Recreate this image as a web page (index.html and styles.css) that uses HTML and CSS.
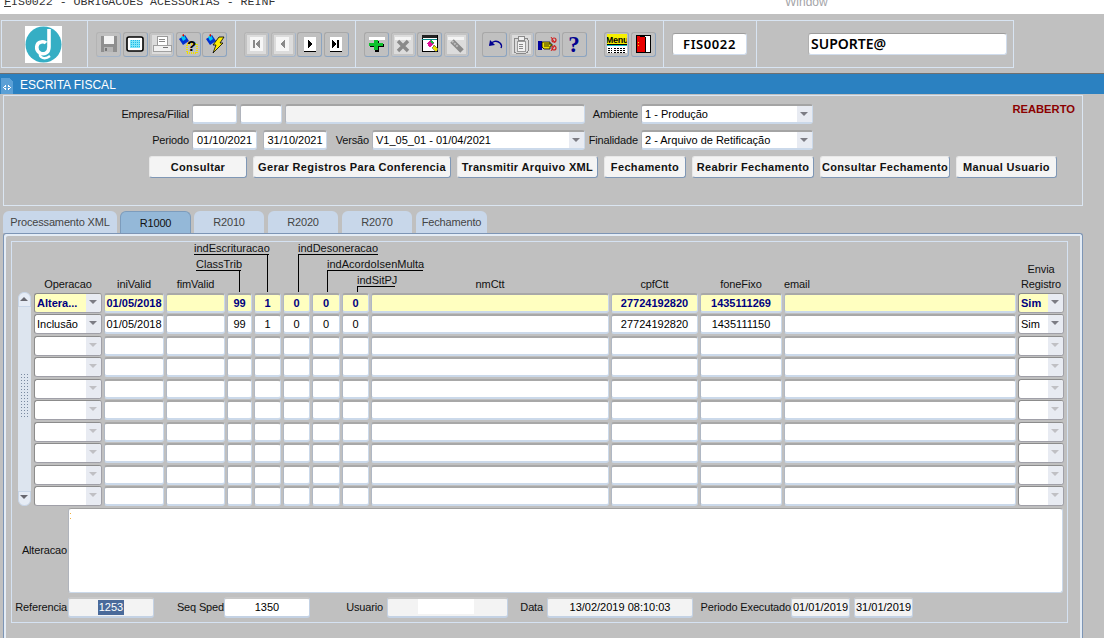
FILE: index.html

```html
<!DOCTYPE html>
<html lang="en">
<head>
    <meta charset="UTF-8">
    <title>FIS0022 - Obrigacoes Acessorias - REINF</title>
    <link rel="stylesheet" href="styles.css">
</head>
<body>
    <div class="titlebar">
        <span class="app-title"><u>F</u>IS0022 - OBRIGACOES ACESSORIAS - REINF</span>
        <span class="app-menu">Window</span>
    </div>

    <div class="toolbar-wrap">
        <div class="toolbar">
            <div class="tb-section tb-logo">
                <svg class="logo" viewBox="0 0 37 37">
                    <rect width="37" height="37" fill="#fff"/>
                    <circle cx="18.500" cy="18.500" r="18" fill="#35aec4"/>
                    <path d="M24 3 V21 C24 27 19 29 15 27 C10 24 11 17 16 16 C18 15.500 20 16 21 17" fill="none" stroke="#fff" stroke-width="3.600"/>
                    <path d="M15 27 C14 32 20 34 25 30" fill="none" stroke="#fff" stroke-width="2.400"/>
                </svg>
            </div>

            <div class="tb-section s-148">
                <button class="tool off">
                    <svg viewBox="0 0 20 20" shape-rendering="crispEdges"><rect x="2" y="2" width="16" height="16" fill="#8f8f8f"/><rect x="5" y="2" width="10" height="8" fill="#f4f4f4"/><rect x="5" y="13" width="9" height="5" fill="#b4b4b4"/><rect x="6" y="14" width="2" height="3" fill="#777"/></svg>
                </button>
                <button class="tool">
                    <svg viewBox="0 0 20 20"><defs><pattern id="dots" width="2" height="2" patternUnits="userSpaceOnUse"><rect width="2" height="2" fill="#7fe6f7"/><rect width="1" height="1" fill="#1fb8e8"/></pattern></defs><rect x="2" y="3" width="16" height="14" rx="2" fill="#fff" stroke="#000" stroke-width="1.600"/><rect x="5" y="6" width="10" height="8" fill="url(#dots)"/></svg>
                </button>
                <button class="tool off dim">
                    <svg viewBox="0 0 20 20" shape-rendering="crispEdges"><rect x="5" y="2" width="10" height="9" fill="#fff" stroke="#9a9a9a"/><path d="M7 5H13M7 7H13" stroke="#888"/><rect x="1" y="11" width="18" height="6" fill="#f2f2f2" stroke="#a0a0a0"/><rect x="11" y="13" width="5" height="1" fill="#777"/></svg>
                </button>
                <button class="tool">
                    <svg viewBox="0 0 20 20"><polygon points="1,5 7,1 11,7 5,11" fill="#0030d0"/><polygon points="3,3 6,1 8,5 5,7" fill="#00c8f0"/><polygon points="4,1 6,0 6,3" fill="#d00000"/><rect x="9" y="10" width="10" height="9" fill="none" stroke="#f0e000" stroke-width="2" stroke-dasharray="1 1"/><text class="ico-q" x="9" y="17">?</text></svg>
                </button>
                <button class="tool">
                    <svg viewBox="0 0 20 20"><polygon points="1,5 7,1 11,7 5,11" fill="#0030d0"/><polygon points="3,3 6,1 8,5 5,7" fill="#00c8f0"/><polygon points="4,1 6,0 6,3" fill="#d00000"/><polygon points="14,3 19,3 15,9 18,9 8,19 11,11 8,11" fill="#ffee00" stroke="#000" stroke-width=".8"/></svg>
                </button>
            </div>

            <div class="tb-section s-120">
                <button class="tool off dim">
                    <svg viewBox="0 0 20 20" shape-rendering="crispEdges"><rect x="3" y="3" width="13" height="14" fill="#f6f6f6"/><rect x="6" y="6" width="2" height="8" fill="#8a8a8a"/><polygon points="13,5 13,15 8,10" fill="#8a8a8a"/></svg>
                </button>
                <button class="tool off dim">
                    <svg viewBox="0 0 20 20" shape-rendering="crispEdges"><rect x="3" y="3" width="13" height="14" fill="#f6f6f6"/><polygon points="12,5 12,15 7,10" fill="#8a8a8a"/></svg>
                </button>
                <button class="tool">
                    <svg viewBox="0 0 20 20" shape-rendering="crispEdges"><rect x="4" y="3" width="12" height="14" fill="#fff"/><path d="M4 17H16" stroke="#000"/><polygon points="8,6 8,14 13,10" fill="#000"/></svg>
                </button>
                <button class="tool">
                    <svg viewBox="0 0 20 20" shape-rendering="crispEdges"><rect x="4" y="3" width="12" height="14" fill="#fff"/><path d="M4 17H16" stroke="#000"/><polygon points="6,6 6,14 11,10" fill="#000"/><rect x="11" y="6" width="2" height="8" fill="#000"/></svg>
                </button>
            </div>

            <div class="tb-section s-120">
                <button class="tool">
                    <svg viewBox="0 0 20 20" shape-rendering="crispEdges"><rect x="2" y="3" width="16" height="3" fill="#fff"/><path d="M8 7H12V10H17V13H12V18H8V13H3V10H8Z" fill="#000"/><path d="M7 6H11V9H16V12H11V16H7V12H2V9H7Z" fill="#0cc02c"/></svg>
                </button>
                <button class="tool off dim">
                    <svg viewBox="0 0 20 20"><rect x="2" y="3" width="16" height="3" fill="#f4f4f4"/><path d="M5 7L15 17M15 7L5 17" stroke="#8a8a8a" stroke-width="3.400"/></svg>
                </button>
                <button class="tool">
                    <svg viewBox="0 0 20 20" shape-rendering="crispEdges"><rect x="2" y="1" width="15" height="16" fill="#fff" stroke="#000"/><rect x="2" y="1" width="15" height="3" fill="#222"/><rect x="2" y="5" width="15" height="1" fill="#0a8a8a"/><polygon points="7,9 11,6 14,9 10,14" fill="#e0109a"/><polygon points="11,6 14,9 12,10 10,8" fill="#20b040"/><polygon points="14,11 18,15 16,18 12,14" fill="#f0e000" stroke="#555" stroke-width=".6"/></svg>
                </button>
                <button class="tool off dim">
                    <svg viewBox="0 0 20 20"><rect x="2" y="3" width="16" height="3" fill="#f4f4f4"/><path d="M6 7L16 17" stroke="#8a8a8a" stroke-width="5"/><path d="M6 7L12 13" stroke="#bdbdbd" stroke-width="2" stroke-dasharray="2 1"/></svg>
                </button>
            </div>

            <div class="tb-section s-120 s-tight">
                <button class="tool">
                    <svg viewBox="0 0 20 20"><path d="M5 6L4 12L10 11" fill="#000090"/><path d="M5 11C7 7 12 6 15 9C16 10 17 12 16 14" fill="none" stroke="#000090" stroke-width="1.400"/></svg>
                </button>
                <button class="tool off dim">
                    <svg viewBox="0 0 20 20" shape-rendering="crispEdges"><rect x="3" y="4" width="14" height="15" rx="2" fill="#dcdcdc" stroke="#8a8a8a"/><rect x="7" y="2" width="6" height="4" fill="#f0f0f0" stroke="#8a8a8a"/><rect x="6" y="7" width="8" height="10" fill="#f2f2f2" stroke="#9a9a9a"/><path d="M8 10H12M8 12H12M8 14H12" stroke="#8a8a8a"/></svg>
                </button>
                <button class="tool">
                    <svg viewBox="0 0 20 20"><rect x="0" y="7" width="4" height="9" fill="#0000a0"/><path d="M4 8H12V10H14V12H12V15H6L4 13Z" fill="#f0e000" stroke="#000" stroke-width=".8"/><path d="M6 10H12M6 12H11" stroke="#000" stroke-width=".8"/><circle cx="16" cy="6" r="2" fill="none" stroke="#d02020" stroke-width="1.200"/><circle cx="16" cy="14" r="2" fill="none" stroke="#d02020" stroke-width="1.200"/><path d="M13 3L17 9M13 17L17 11" stroke="#d02020"/></svg>
                </button>
                <button class="tool">
                    <svg viewBox="0 0 20 20"><text class="ico-help" x="10" y="18">?</text></svg>
                </button>
            </div>

            <div class="tb-section s-68">
                <button class="tool">
                    <svg viewBox="0 0 20 20" shape-rendering="crispEdges"><rect x="0" y="0" width="20" height="10" fill="#f6f000"/><text class="ico-menu" x="10" y="8.500">Menu</text><rect x="0" y="10" width="20" height="1" fill="#000"/><rect x="0" y="11" width="20" height="1" fill="#10c0c0"/><rect x="0" y="12" width="20" height="7" fill="#fff"/><path d="M1 14H5M7 14H19M1 16H5M7 16H19M1 18H5M7 18H19" stroke="#000" stroke-dasharray="2 1"/></svg>
                </button>
                <button class="tool">
                    <svg viewBox="0 0 20 20" shape-rendering="crispEdges"><rect x="3" y="1" width="14" height="17" fill="#fff" stroke="#000"/><polygon points="3,1 12,3 12,18 3,18" fill="#e80000" stroke="#000"/><rect x="5" y="8" width="1" height="1" fill="#f0e000"/><rect x="5" y="11" width="1" height="1" fill="#f0e000"/></svg>
                </button>
            </div>

            <div class="tb-section s-93">
                <div class="tb-field code">FIS0022</div>
            </div>
            <div class="tb-section s-last">
                <div class="tb-field user">SUPORTE@</div>
            </div>
        </div>
    </div>

    <div class="window-bar">
        <svg class="window-icon" viewBox="0 0 12 16" shape-rendering="crispEdges"><path d="M0 0H8L12 4V16H0Z" fill="#5ba0d6"/><path d="M3 9H5V7L2 9.500L5 12V10H3ZM9 9H7V7L10 9.500L7 12V10H9Z" fill="#fff"/></svg>
        <span>ESCRITA FISCAL</span>
    </div>

    <div class="filter-panel">
        <div class="form-row">
            <label class="lbl lbl-first">Empresa/Filial</label>
            <div class="field w-45"></div>
            <div class="field w-42"></div>
            <div class="field ro w-300"></div>
            <label class="lbl w-50">Ambiente</label>
            <div class="field combo w-172"><span>1 - Produção</span><i class="arrow"></i></div>
            <div class="status">REABERTO</div>
        </div>
        <div class="form-row">
            <label class="lbl lbl-first">Periodo</label>
            <div class="field center w-65">01/10/2021</div>
            <div class="field center w-64 ml-3">31/10/2021</div>
            <label class="lbl w-39">Versão</label>
            <div class="field combo w-213"><span>V1_05_01 - 01/04/2021</span><i class="arrow"></i></div>
            <label class="lbl w-50">Finalidade</label>
            <div class="field combo w-172"><span>2 - Arquivo de Retificação</span><i class="arrow"></i></div>
        </div>
        <div class="button-row">
            <button class="btn w-98">Consultar</button>
            <button class="btn w-198">Gerar Registros Para Conferencia</button>
            <button class="btn w-141">Transmitir Arquivo XML</button>
            <button class="btn w-82">Fechamento</button>
            <button class="btn w-122">Reabrir Fechamento</button>
            <button class="btn w-130">Consultar Fechamento</button>
            <button class="btn w-101">Manual Usuario</button>
        </div>
    </div>

    <div class="tabs">
        <div class="tab w-114">Processamento XML</div>
        <div class="tab active w-71">R1000</div>
        <div class="tab w-70">R2010</div>
        <div class="tab w-70 ml-1">R2020</div>
        <div class="tab w-70 ml-1">R2070</div>
        <div class="tab w-71 ml-1">Fechamento</div>
    </div>

    <div class="tab-panel">
        <div class="inner-panel">
            <div class="grid" id="grid">
                <div class="link link-escrit">indEscrituracao</div>
                <div class="link link-class">ClassTrib</div>
                <div class="link link-deson">indDesoneracao</div>
                <div class="link link-acordo">indAcordoIsenMulta</div>
                <div class="link link-sit">indSitPJ</div>

                <div class="head"></div>
                <div class="head">Operacao</div>
                <div class="head">iniValid</div>
                <div class="head">fimValid</div>
                <div class="head span-5"></div>
                <div class="head">nmCtt</div>
                <div class="head">cpfCtt</div>
                <div class="head">foneFixo</div>
                <div class="head left">email</div>
                <div class="head">Envia<br>Registro</div>

                <div class="scrollbar">
                    <div class="sb-btn sb-up"><i class="arrow-up"></i></div>
                    <div class="sb-track"><div class="sb-grip"></div></div>
                    <div class="sb-btn sb-down"><i class="arrow-down"></i></div>
                </div>
            </div>

            <div class="memo-row">
                <label class="lbl w-56">Alteracao</label>
                <div class="memo"></div>
            </div>

            <div class="foot-row">
                <label class="lbl w-56">Referencia</label>
                <div class="field ro center w-86"><span class="selected">1253</span></div>
                <label class="lbl w-70">Seq Sped</label>
                <div class="field center w-86">1350</div>
                <label class="lbl w-77 pad-4">Usuario</label>
                <div class="field ro w-121 user-field"><span class="masked"></span></div>
                <label class="lbl w-39 pad-4">Data</label>
                <div class="field ro center w-146">13/02/2019 08:10:03</div>
                <label class="lbl w-98">Periodo Executado</label>
                <div class="field ro center w-59">01/01/2019</div>
                <div class="field ro center w-59 ml-4">31/01/2019</div>
            </div>
        </div>
    </div>

    <script>
        // rows of the multi record block, the two first come filled
        const rows = [
            { cls: 'current', op: 'Altera...', ini: '01/05/2018', trib: '99', esc: '1', des: '0', aco: '0', sit: '0', cpf: '27724192820', fone: '1435111269', env: 'Sim' },
            { cls: '', op: 'Inclusão', ini: '01/05/2018', trib: '99', esc: '1', des: '0', aco: '0', sit: '0', cpf: '27724192820', fone: '1435111150', env: 'Sim' }
        ];
        const grid = document.getElementById('grid');

        for (let i = 0; i < 10; i++) {
            const r = rows[i] || { cls: 'empty' };
            const cells = [
                `<div class="cell combo ${r.cls}"><span>${r.op || ''}</span><i class="arrow"></i></div>`,
                `<div class="cell ${r.cls}">${r.ini || ''}</div>`,
                `<div class="cell ${r.cls}"></div>`,
                `<div class="cell ${r.cls}">${r.trib || ''}</div>`,
                `<div class="cell ${r.cls}">${r.esc || ''}</div>`,
                `<div class="cell ${r.cls}">${r.des || ''}</div>`,
                `<div class="cell ${r.cls}">${r.aco || ''}</div>`,
                `<div class="cell ${r.cls}">${r.sit || ''}</div>`,
                `<div class="cell ${r.cls}"></div>`,
                `<div class="cell ${r.cls}">${r.cpf || ''}</div>`,
                `<div class="cell ${r.cls}">${r.fone || ''}</div>`,
                `<div class="cell ${r.cls}"></div>`,
                `<div class="cell combo ${r.cls}"><span>${r.env || ''}</span><i class="arrow"></i></div>`
            ];
            grid.insertAdjacentHTML('beforeend', cells.join(''));
        }
    </script>
</body>
</html>
```

FILE: styles.css

```css
* {
    margin: 0;
    padding: 0;
    box-sizing: border-box;
}

body {
    width: 1104px;
    height: 638px;
    overflow: hidden;
    background: #c0c0c0;
    color: #000;
    font-family: "Liberation Sans", Arial, sans-serif;
    font-size: 11px;
}

/* top strip, window title cut by the capture */
.titlebar {
    height: 14px;
    background: #fff;
    overflow: hidden;
    display: flex;
}

.app-title {
    font-family: "Liberation Mono", monospace;
    font-size: 11.6px;
    line-height: 14px;
    margin: -5px 0 0 4px;
    color: #333;
    width: 781px;
    white-space: pre;
}

.app-menu {
    font-size: 12px;
    line-height: 14px;
    margin-top: -5px;
    color: #a4a4a8;
}

/* toolbar */
.toolbar-wrap {
    height: 59px;
    padding: 6px 0 0 1px;
}

.toolbar {
    width: 1013px;
    height: 48px;
    display: flex;
    border: 1px solid #d8e4f2;
}

.tb-section {
    display: flex;
    align-items: center;
    gap: 1.5px;
    padding-left: 8px;
    border-right: 1px solid #d8e4f2;
    flex: none;
}

.tb-logo {
    width: 86px;
    padding-left: 23px;
}

.logo {
    width: 37px;
    height: 37px;
}

.s-148 { width: 148px; }
.s-120 { width: 120px; }
.s-68 { width: 68px; }
.s-93 { width: 93px; }
.s-tight { padding-left: 6px; }
.s-last { flex: 1; border-right: none; padding-left: 51px; }

.tool {
    width: 25px;
    height: 25px;
    display: flex;
    align-items: center;
    justify-content: center;
    background: #c0c0c0;
    border: 1px solid;
    border-color: #a8a8a8 #8ca4c0 #8ca4c0 #a8a8a8;
    border-radius: 3px;
}

.tool.off {
    border-color: #b4b4b4 #a4b4c8 #a4b4c8 #b4b4b4;
}

.tool.dim {
    background: #dcdcdc;
    box-shadow: inset 0 0 0 2px #c4c4c4;
}

.tool svg {
    width: 20px;
    height: 20px;
    display: block;
}

.ico-q {
    font: bold 15px "Liberation Sans", sans-serif;
    fill: #000;
}

.ico-help {
    font: bold 23px "Liberation Serif", serif;
    fill: #000090;
    text-anchor: middle;
}

.ico-menu {
    font: bold 9px "Liberation Sans", sans-serif;
    fill: #000;
    text-anchor: middle;
    letter-spacing: -0.3px;
}

.tb-field {
    height: 22px;
    background: #fff;
    border: 1px solid;
    border-color: #9c9c9c #d0dcec #d0dcec #b0b0b0;
    border-radius: 3px;
    font-family: "Noto Sans", sans-serif;
    font-weight: 600;
    line-height: 20px;
}

.code {
    width: 75px;
    font-size: 13px;
    text-align: center;
    letter-spacing: 0.6px;
}

.user {
    width: 199px;
    font-size: 14px;
    padding-left: 2px;
}

/* blue window bar */
.window-bar {
    height: 21px;
    background: #2b81c1;
    border-top: 1px solid #707070;
    color: #fff;
    font-size: 12px;
    display: flex;
    align-items: center;
    gap: 7px;
    padding: 1px 0 0 1px;
}

.window-icon {
    width: 12px;
    height: 16px;
    margin-top: 3px;
}

/* header form */
.filter-panel {
    width: 1080px;
    height: 111px;
    margin: 1px 0 0 3px;
    padding-top: 8px;
    border: 1px solid #dbe6f2;
}

.form-row {
    height: 20px;
    margin-bottom: 6px;
    display: flex;
    gap: 3px;
}

.lbl {
    flex: none;
    line-height: 21px;
    text-align: right;
    white-space: nowrap;
    letter-spacing: -0.15px;
    color: #111;
}

.lbl-first { width: 185px; }

.status {
    margin-left: auto;
    padding-right: 7px;
    color: #8b0000;
    font-size: 11.2px;
    font-weight: bold;
    line-height: 10px;
}

.field {
    flex: none;
    height: 20px;
    line-height: 17px;
    padding: 0 3px;
    background: #fff;
    border: 1px solid;
    border-width: 2px 1px;
    border-color: #a4a4a4 #cbd9ea #cbd9ea #b0b4bc;
    border-radius: 3px;
    white-space: nowrap;
    overflow: hidden;
}

.field.ro { background: #f3f3f3; }
.center { text-align: center; }

.combo {
    display: flex;
    justify-content: space-between;
    padding-right: 0;
}

.arrow {
    flex: none;
    width: 15px;
    background: #e8ebf2;
    position: relative;
}

.arrow::after {
    content: "";
    position: absolute;
    left: 3px;
    top: 6px;
    border-left: 4px solid transparent;
    border-right: 4px solid transparent;
    border-top: 4px solid #7c7c84;
}

.button-row {
    display: flex;
    gap: 6px;
    padding-left: 145px;
}

.btn {
    flex: none;
    height: 22px;
    background: #f4f4f4;
    border: 1px solid;
    border-color: #e8e8e8 #7f97b5 #7f97b5 #e8e8e8;
    border-radius: 3px;
    font-family: "Liberation Sans", Arial, sans-serif;
    font-size: 11px;
    font-weight: bold;
    letter-spacing: 0.35px;
    color: #111;
    white-space: nowrap;
}

/* widths used by the form items */
.w-39 { width: 39px; }
.w-42 { width: 42px; }
.w-45 { width: 45px; }
.w-50 { width: 50px; }
.w-56 { width: 56px; padding-right: 1px; }
.w-59 { width: 59px; padding: 0; }
.w-64 { width: 64px; }
.w-65 { width: 65px; }
.w-70 { width: 70px; }
.w-71 { width: 71px; }
.w-77 { width: 77px; }
.w-82 { width: 82px; }
.w-86 { width: 86px; }
.w-98 { width: 98px; }
.w-101 { width: 101px; }
.w-114 { width: 114px; }
.w-121 { width: 121px; }
.w-122 { width: 122px; }
.w-130 { width: 130px; }
.w-141 { width: 141px; }
.w-146 { width: 146px; }
.w-172 { width: 172px; }
.w-198 { width: 198px; }
.w-213 { width: 213px; }
.w-300 { width: 300px; }
.ml-1 { margin-left: 1px; }
.ml-3 { margin-left: 3px; }
.ml-4 { margin-left: 4px; }
.pad-4 { padding-right: 4px; }

/* tabs */
.tabs {
    display: flex;
    gap: 3px;
    height: 22px;
    margin-top: 5px;
    padding-left: 3px;
}

.tab {
    flex: none;
    background: #c8d7ea;
    border-radius: 6px 6px 0 0;
    color: #444;
    text-align: center;
    line-height: 23px;
    letter-spacing: -0.15px;
}

.tab.active {
    background: #94b8d8;
    border: 1px solid #7d9cbc;
    border-bottom: none;
    color: #111;
    line-height: 22px;
}

.tab-panel {
    width: 1080px;
    height: 420px;
    margin-left: 3px;
    padding: 7px 0 0 7px;
    border: 1px solid #7d95b5;
    border-bottom: none;
    border-radius: 3px 3px 0 0;
    box-shadow: inset 2px 2px 0 #e4ecf5, inset -2px 0 0 #e4ecf5;
}

.inner-panel {
    width: 1057px;
    height: 382px;
    border: 1px solid #d5e2f2;
}

/* multi record block */
.grid {
    position: relative;
    display: grid;
    grid-template-columns: 14px 68px 60px 59px 25px 27px 27px 28px 27px 238px 87px 82px 232px 46px;
    grid-template-rows: 49.6px repeat(10, 20px);
    gap: 1.44px 2px;
    padding-left: 6px;
}

.head {
    align-self: end;
    text-align: center;
    line-height: 15px;
    letter-spacing: -0.1px;
    color: #111;
}

.span-5 { grid-column: span 5; }
.left { text-align: left; }

.cell {
    height: 20px;
    line-height: 17px;
    text-align: center;
    background: #fff;
    border: 1px solid;
    border-width: 2px 1px;
    border-color: #a8a8a8 #cbd9ea #cbd9ea #b0b8c4;
    border-radius: 3px;
    overflow: hidden;
    white-space: nowrap;
}

.cell.combo {
    text-align: left;
    padding-left: 2px;
    border-width: 1px;
    line-height: 19px;
    border-color: #8c8c8c #a0a0a8 #a0a0a8 #8c8c8c;
}

.cell.current {
    background: #ffffc0;
    color: #000080;
    font-weight: bold;
}

.cell.empty .arrow::after {
    border-top-color: #c0c0c4;
}

.link {
    position: absolute;
    height: 13px;
    line-height: 13px;
    border-bottom: 1px solid #000;
    color: #111;
    white-space: nowrap;
}

.link::after {
    content: "";
    position: absolute;
    top: 100%;
    width: 1px;
    background: #000;
}

.link-escrit { left: 182px; top: 0; width: 75px; }
.link-class { left: 184px; top: 16px; width: 45px; }
.link-deson { left: 286px; top: 0; width: 80px; }
.link-acordo { left: 315px; top: 16px; width: 96px; }
.link-sit { left: 345px; top: 32px; width: 38px; }

.link-escrit::after { right: 1px; height: 38px; }
.link-class::after { right: 1px; height: 22px; }
.link-deson::after { left: 0; height: 38px; }
.link-acordo::after { left: 0; height: 22px; }
.link-sit::after { left: 0; height: 6px; }

.scrollbar {
    grid-column: 1;
    grid-row: 2 / span 10;
    width: 13px;
    margin-top: -1px;
    display: flex;
    flex-direction: column;
}

.sb-btn {
    height: 15px;
    flex: none;
    background: #e6ecf5;
    border: 1px solid #c8d6e8;
    position: relative;
}

.sb-up { border-radius: 6px 6px 0 0; }
.sb-down { border-radius: 0 0 6px 6px; }

.arrow-up,
.arrow-down {
    position: absolute;
    left: 1px;
    border-left: 4px solid transparent;
    border-right: 4px solid transparent;
}

.arrow-up {
    top: 4px;
    border-bottom: 4px solid #686870;
}

.arrow-down {
    top: 3px;
    border-top: 4px solid #686870;
}

.sb-track {
    flex: 1;
    background: #dde5ef;
    display: flex;
    align-items: center;
    justify-content: center;
}

.sb-grip {
    width: 9px;
    height: 44px;
    margin-top: -8px;
    background: radial-gradient(circle, #7a8aa0 0.8px, transparent 1px) 0 0 / 3px 3px;
}

/* memo and footer */
.memo-row {
    display: flex;
    height: 85px;
    margin-top: 2px;
}

.memo-row .lbl {
    line-height: 85px;
}

.memo {
    position: relative;
    width: 995px;
    background: #fff;
    border: 1px solid;
    border-color: #a0a0a0 #cbd9ea #cbd9ea #b0b4bc;
    border-radius: 3px;
}

.memo::before {
    content: "";
    position: absolute;
    left: 1px;
    top: 4px;
    width: 1px;
    height: 1px;
    background: #f0b040;
    box-shadow: 0 5px #f0b040;
}

.foot-row {
    display: flex;
    height: 21px;
    margin-top: 4px;
}

.foot-row .field {
    height: 21px;
    line-height: 17px;
    border-color: #c4d2e4;
    border-top-color: #c8c8c8;
}

.selected {
    display: inline-block;
    padding: 0 1px;
    height: 15px;
    line-height: 15px;
    background: #4a6a9a;
    color: #fff;
}

.user-field {
    padding: 0 0 0 30px;
}

.masked {
    display: block;
    width: 56px;
    height: 15px;
    background: #fff;
}
```
